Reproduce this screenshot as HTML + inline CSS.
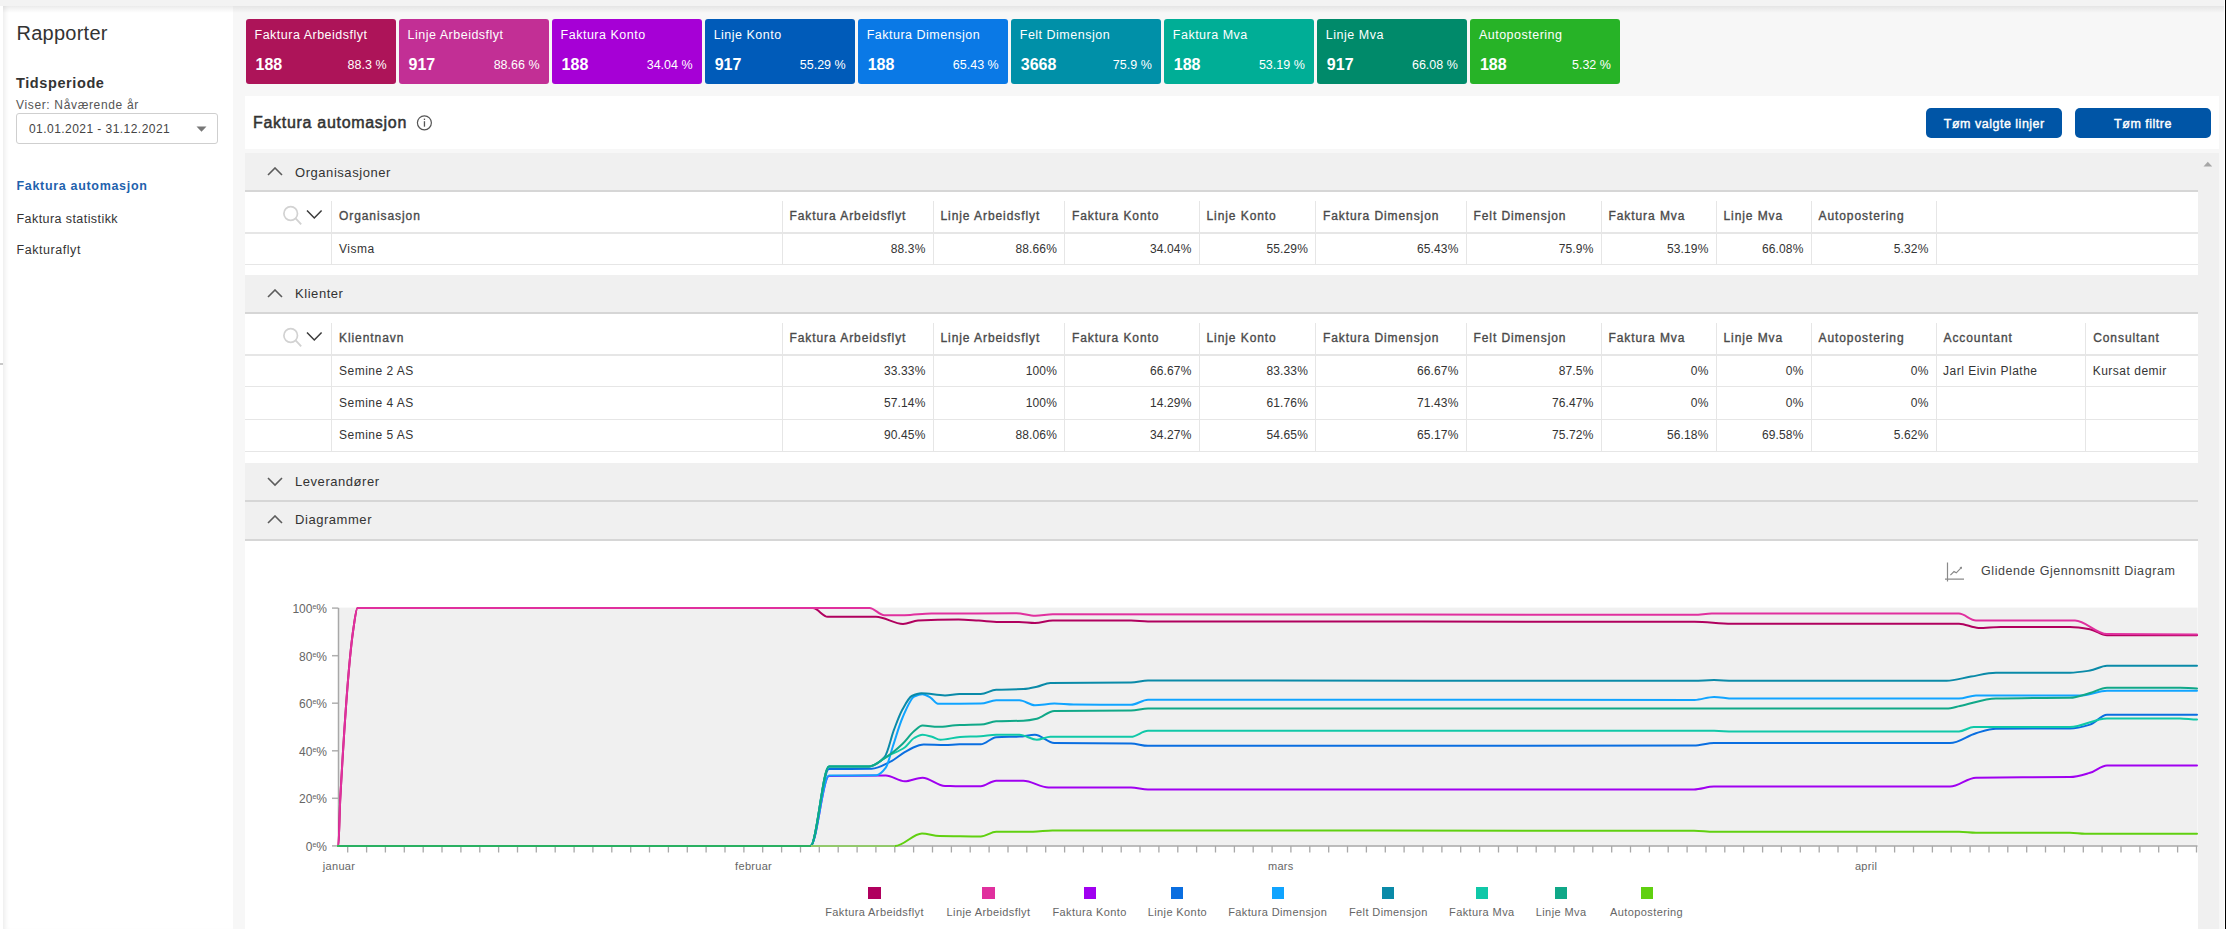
<!DOCTYPE html><html><head><meta charset="utf-8"><style>
*{box-sizing:border-box;margin:0;padding:0}
html,body{width:2226px;height:929px;overflow:hidden;background:#f7f7f7;font-family:"Liberation Sans", sans-serif;color:#333}
.a{position:absolute}
.t{position:absolute;white-space:nowrap;line-height:1}
.tile{position:absolute;top:19px;width:150px;height:65px;border-radius:3px;color:#fff}
.btn{position:absolute;top:108px;height:29.5px;background:#0055a6;border-radius:5px;color:#fff;-webkit-text-stroke:0.4px #fff;letter-spacing:0.5px;font-size:12.5px;text-align:center;line-height:33.5px}
.sec{position:absolute;left:245px;width:1952.5px;background:#f0f0f0;border-bottom:2px solid #d6d6d6}
.vl{position:absolute;width:1px;background:#e6e6e6}
.hl{position:absolute;height:1px;background:#e6e6e6}
</style></head><body>

<div class="a" style="left:3px;top:6px;width:230px;height:923px;background:#fff;box-shadow:inset 5px 0 5px -3px #ececec"></div>
<div class="a" style="left:0;top:0;width:2226px;height:5.5px;background:#f3f3f3"></div>
<div class="a" style="left:0;top:5.5px;width:2226px;height:7px;background:linear-gradient(rgba(0,0,0,0.075),rgba(0,0,0,0))"></div>
<div class="t" style="left:16.5px;top:23.2px;font-size:20px;letter-spacing:0.25px;color:#333">Rapporter</div>
<div class="t" style="left:16px;top:76.3px;font-size:14.5px;font-weight:bold;letter-spacing:0.6px;color:#333">Tidsperiode</div>
<div class="t" style="left:16px;top:98.8px;font-size:12px;letter-spacing:0.65px;color:#555">Viser: Nåværende år</div>
<div class="a" style="left:16.4px;top:113px;width:202px;height:30.5px;border:1px solid #cfcfcf;border-radius:3px;background:#fff"></div>
<div class="t" style="left:29px;top:122.5px;font-size:12px;letter-spacing:0.45px;color:#444">01.01.2021 - 31.12.2021</div>
<svg class="a" style="left:196px;top:126px" width="12" height="7"><path d="M0.5 0.5 H10.5 L5.5 5.8Z" fill="#777"/></svg>
<div class="t" style="left:16.5px;top:180px;font-size:12.5px;font-weight:bold;letter-spacing:0.68px;color:#1f62ad">Faktura automasjon</div>
<div class="t" style="left:16.5px;top:212.5px;font-size:12.5px;letter-spacing:0.43px;color:#333">Faktura statistikk</div>
<div class="t" style="left:16.5px;top:243.5px;font-size:12.5px;letter-spacing:0.55px;color:#333">Fakturaflyt</div>
<div class="tile" style="left:245.50px;background:#ad1459">
<div class="t" style="left:9px;top:10px;font-size:12.5px;letter-spacing:0.5px">Faktura Arbeidsflyt</div>
<div class="t" style="left:10px;top:37.5px;font-size:16px;font-weight:bold">188</div>
<div class="t" style="right:9px;top:39.5px;font-size:12.5px">88.3 %</div>
</div>
<div class="tile" style="left:398.55px;background:#c22f95">
<div class="t" style="left:9px;top:10px;font-size:12.5px;letter-spacing:0.5px">Linje Arbeidsflyt</div>
<div class="t" style="left:10px;top:37.5px;font-size:16px;font-weight:bold">917</div>
<div class="t" style="right:9px;top:39.5px;font-size:12.5px">88.66 %</div>
</div>
<div class="tile" style="left:551.60px;background:#a600d6">
<div class="t" style="left:9px;top:10px;font-size:12.5px;letter-spacing:0.5px">Faktura Konto</div>
<div class="t" style="left:10px;top:37.5px;font-size:16px;font-weight:bold">188</div>
<div class="t" style="right:9px;top:39.5px;font-size:12.5px">34.04 %</div>
</div>
<div class="tile" style="left:704.65px;background:#005bb9">
<div class="t" style="left:9px;top:10px;font-size:12.5px;letter-spacing:0.5px">Linje Konto</div>
<div class="t" style="left:10px;top:37.5px;font-size:16px;font-weight:bold">917</div>
<div class="t" style="right:9px;top:39.5px;font-size:12.5px">55.29 %</div>
</div>
<div class="tile" style="left:857.70px;background:#0a79e6">
<div class="t" style="left:9px;top:10px;font-size:12.5px;letter-spacing:0.5px">Faktura Dimensjon</div>
<div class="t" style="left:10px;top:37.5px;font-size:16px;font-weight:bold">188</div>
<div class="t" style="right:9px;top:39.5px;font-size:12.5px">65.43 %</div>
</div>
<div class="tile" style="left:1010.75px;background:#0090a8">
<div class="t" style="left:9px;top:10px;font-size:12.5px;letter-spacing:0.5px">Felt Dimensjon</div>
<div class="t" style="left:10px;top:37.5px;font-size:16px;font-weight:bold">3668</div>
<div class="t" style="right:9px;top:39.5px;font-size:12.5px">75.9 %</div>
</div>
<div class="tile" style="left:1163.80px;background:#00ae96">
<div class="t" style="left:9px;top:10px;font-size:12.5px;letter-spacing:0.5px">Faktura Mva</div>
<div class="t" style="left:10px;top:37.5px;font-size:16px;font-weight:bold">188</div>
<div class="t" style="right:9px;top:39.5px;font-size:12.5px">53.19 %</div>
</div>
<div class="tile" style="left:1316.85px;background:#008a6a">
<div class="t" style="left:9px;top:10px;font-size:12.5px;letter-spacing:0.5px">Linje Mva</div>
<div class="t" style="left:10px;top:37.5px;font-size:16px;font-weight:bold">917</div>
<div class="t" style="right:9px;top:39.5px;font-size:12.5px">66.08 %</div>
</div>
<div class="tile" style="left:1469.90px;background:#27b327">
<div class="t" style="left:9px;top:10px;font-size:12.5px;letter-spacing:0.5px">Autopostering</div>
<div class="t" style="left:10px;top:37.5px;font-size:16px;font-weight:bold">188</div>
<div class="t" style="right:9px;top:39.5px;font-size:12.5px">5.32 %</div>
</div>
<div class="a" style="left:245px;top:96px;width:1974px;height:52.6px;background:#fff"></div>
<div class="t" style="left:253px;top:114.5px;font-size:16px;-webkit-text-stroke:0.5px #333;letter-spacing:0.7px;color:#333">Faktura automasjon</div>
<svg class="a" style="left:415px;top:113px" width="20" height="20"><circle cx="9.4" cy="9.8" r="7" fill="none" stroke="#555" stroke-width="1.2"/><rect x="8.8" y="8.2" width="1.3" height="5.5" fill="#555"/><rect x="8.8" y="5.6" width="1.3" height="1.4" fill="#555"/></svg>
<div class="btn" style="left:1926.3px;width:136px">Tøm valgte linjer</div>
<div class="btn" style="left:2075px;width:136px">Tøm filtre</div>
<div class="a" style="left:245px;top:152.5px;width:1952.5px;height:777px;background:#fff"></div>
<div class="a" style="left:2197.5px;top:152.5px;width:21.5px;height:777px;background:#f0f0f0"></div>
<svg class="a" style="left:2203px;top:161px" width="10" height="6"><path d="M0.5 5.5 L4.8 0.8 L9.2 5.5Z" fill="#a6a6a6"/></svg>
<div class="a" style="left:2223.7px;top:0;width:1.3px;height:929px;background:#fff"></div>
<div class="a" style="left:2225px;top:0;width:1px;height:929px;background:#000"></div>
<div class="sec" style="top:153px;height:39px"></div>
<svg class="a" style="left:267px;top:166.5px" width="16" height="10"><path d="M1 8 L8 1 L15 8" fill="none" stroke="#5c5c5c" stroke-width="1.6"/></svg>
<div class="t" style="left:295px;top:165.7px;font-size:13px;letter-spacing:0.55px;color:#333">Organisasjoner</div>
<svg class="a" style="left:282px;top:205px" width="44" height="20"><circle cx="8.7" cy="8.5" r="6.8" fill="none" stroke="#d2d2d2" stroke-width="1.7"/><path d="M13.6 13.4 L19.2 19.4" stroke="#d2d2d2" stroke-width="1.8"/><path d="M25 5.5 L32.3 13 L39.6 5.5" fill="none" stroke="#3a3a3a" stroke-width="1.5"/></svg>
<div class="vl" style="left:331px;top:200.6px;height:63.800000000000004px"></div>
<div class="vl" style="left:781.5px;top:200.6px;height:63.800000000000004px"></div>
<div class="vl" style="left:932.5px;top:200.6px;height:63.800000000000004px"></div>
<div class="vl" style="left:1064px;top:200.6px;height:63.800000000000004px"></div>
<div class="vl" style="left:1198.5px;top:200.6px;height:63.800000000000004px"></div>
<div class="vl" style="left:1315px;top:200.6px;height:63.800000000000004px"></div>
<div class="vl" style="left:1465.5px;top:200.6px;height:63.800000000000004px"></div>
<div class="vl" style="left:1600.5px;top:200.6px;height:63.800000000000004px"></div>
<div class="vl" style="left:1715.5px;top:200.6px;height:63.800000000000004px"></div>
<div class="vl" style="left:1810.5px;top:200.6px;height:63.800000000000004px"></div>
<div class="vl" style="left:1935.5px;top:200.6px;height:63.800000000000004px"></div>
<div class="hl" style="left:245px;top:232px;width:1952.5px;height:1.5px"></div>
<div class="hl" style="left:245px;top:264.4px;width:1952.5px"></div>
<div class="t hd" style="left:339px;top:209.8px;font-size:12px;letter-spacing:0.92px;-webkit-text-stroke:0.35px #4a4a4a;color:#4a4a4a">Organisasjon</div>
<div class="t hd" style="left:789.5px;top:209.8px;font-size:12px;letter-spacing:0.92px;-webkit-text-stroke:0.35px #4a4a4a;color:#4a4a4a">Faktura Arbeidsflyt</div>
<div class="t hd" style="left:940.5px;top:209.8px;font-size:12px;letter-spacing:0.92px;-webkit-text-stroke:0.35px #4a4a4a;color:#4a4a4a">Linje Arbeidsflyt</div>
<div class="t hd" style="left:1072px;top:209.8px;font-size:12px;letter-spacing:0.92px;-webkit-text-stroke:0.35px #4a4a4a;color:#4a4a4a">Faktura Konto</div>
<div class="t hd" style="left:1206.5px;top:209.8px;font-size:12px;letter-spacing:0.92px;-webkit-text-stroke:0.35px #4a4a4a;color:#4a4a4a">Linje Konto</div>
<div class="t hd" style="left:1323px;top:209.8px;font-size:12px;letter-spacing:0.92px;-webkit-text-stroke:0.35px #4a4a4a;color:#4a4a4a">Faktura Dimensjon</div>
<div class="t hd" style="left:1473.5px;top:209.8px;font-size:12px;letter-spacing:0.92px;-webkit-text-stroke:0.35px #4a4a4a;color:#4a4a4a">Felt Dimensjon</div>
<div class="t hd" style="left:1608.5px;top:209.8px;font-size:12px;letter-spacing:0.92px;-webkit-text-stroke:0.35px #4a4a4a;color:#4a4a4a">Faktura Mva</div>
<div class="t hd" style="left:1723.5px;top:209.8px;font-size:12px;letter-spacing:0.92px;-webkit-text-stroke:0.35px #4a4a4a;color:#4a4a4a">Linje Mva</div>
<div class="t hd" style="left:1818.5px;top:209.8px;font-size:12px;letter-spacing:0.92px;-webkit-text-stroke:0.35px #4a4a4a;color:#4a4a4a">Autopostering</div>
<div class="t" style="left:339px;top:242.5px;font-size:12px;letter-spacing:0.5px;color:#333">Visma</div>
<div class="t" style="right:1300.5px;top:242.5px;font-size:12px;letter-spacing:0.15px;color:#333">88.3%</div>
<div class="t" style="right:1169.0px;top:242.5px;font-size:12px;letter-spacing:0.15px;color:#333">88.66%</div>
<div class="t" style="right:1034.5px;top:242.5px;font-size:12px;letter-spacing:0.15px;color:#333">34.04%</div>
<div class="t" style="right:918.0px;top:242.5px;font-size:12px;letter-spacing:0.15px;color:#333">55.29%</div>
<div class="t" style="right:767.5px;top:242.5px;font-size:12px;letter-spacing:0.15px;color:#333">65.43%</div>
<div class="t" style="right:632.5px;top:242.5px;font-size:12px;letter-spacing:0.15px;color:#333">75.9%</div>
<div class="t" style="right:517.5px;top:242.5px;font-size:12px;letter-spacing:0.15px;color:#333">53.19%</div>
<div class="t" style="right:422.5px;top:242.5px;font-size:12px;letter-spacing:0.15px;color:#333">66.08%</div>
<div class="t" style="right:297.5px;top:242.5px;font-size:12px;letter-spacing:0.15px;color:#333">5.32%</div>
<div class="sec" style="top:275px;height:39px"></div>
<svg class="a" style="left:267px;top:288.5px" width="16" height="10"><path d="M1 8 L8 1 L15 8" fill="none" stroke="#5c5c5c" stroke-width="1.6"/></svg>
<div class="t" style="left:295px;top:287.1px;font-size:13px;letter-spacing:0.55px;color:#333">Klienter</div>
<svg class="a" style="left:282px;top:327px" width="44" height="20"><circle cx="8.7" cy="8.5" r="6.8" fill="none" stroke="#d2d2d2" stroke-width="1.7"/><path d="M13.6 13.4 L19.2 19.4" stroke="#d2d2d2" stroke-width="1.8"/><path d="M25 5.5 L32.3 13 L39.6 5.5" fill="none" stroke="#3a3a3a" stroke-width="1.5"/></svg>
<div class="vl" style="left:331px;top:322.6px;height:128.6px"></div>
<div class="vl" style="left:781.5px;top:322.6px;height:128.6px"></div>
<div class="vl" style="left:932.5px;top:322.6px;height:128.6px"></div>
<div class="vl" style="left:1064px;top:322.6px;height:128.6px"></div>
<div class="vl" style="left:1198.5px;top:322.6px;height:128.6px"></div>
<div class="vl" style="left:1315px;top:322.6px;height:128.6px"></div>
<div class="vl" style="left:1465.5px;top:322.6px;height:128.6px"></div>
<div class="vl" style="left:1600.5px;top:322.6px;height:128.6px"></div>
<div class="vl" style="left:1715.5px;top:322.6px;height:128.6px"></div>
<div class="vl" style="left:1810.5px;top:322.6px;height:128.6px"></div>
<div class="vl" style="left:1935.5px;top:322.6px;height:128.6px"></div>
<div class="vl" style="left:2085.2px;top:322.6px;height:128.6px"></div>
<div class="hl" style="left:245px;top:354px;width:1952.5px;height:1.5px"></div>
<div class="hl" style="left:245px;top:386.4px;width:1952.5px"></div>
<div class="hl" style="left:245px;top:418.8px;width:1952.5px"></div>
<div class="hl" style="left:245px;top:451.2px;width:1952.5px"></div>
<div class="t hd" style="left:339px;top:331.8px;font-size:12px;letter-spacing:0.92px;-webkit-text-stroke:0.35px #4a4a4a;color:#4a4a4a">Klientnavn</div>
<div class="t hd" style="left:789.5px;top:331.8px;font-size:12px;letter-spacing:0.92px;-webkit-text-stroke:0.35px #4a4a4a;color:#4a4a4a">Faktura Arbeidsflyt</div>
<div class="t hd" style="left:940.5px;top:331.8px;font-size:12px;letter-spacing:0.92px;-webkit-text-stroke:0.35px #4a4a4a;color:#4a4a4a">Linje Arbeidsflyt</div>
<div class="t hd" style="left:1072px;top:331.8px;font-size:12px;letter-spacing:0.92px;-webkit-text-stroke:0.35px #4a4a4a;color:#4a4a4a">Faktura Konto</div>
<div class="t hd" style="left:1206.5px;top:331.8px;font-size:12px;letter-spacing:0.92px;-webkit-text-stroke:0.35px #4a4a4a;color:#4a4a4a">Linje Konto</div>
<div class="t hd" style="left:1323px;top:331.8px;font-size:12px;letter-spacing:0.92px;-webkit-text-stroke:0.35px #4a4a4a;color:#4a4a4a">Faktura Dimensjon</div>
<div class="t hd" style="left:1473.5px;top:331.8px;font-size:12px;letter-spacing:0.92px;-webkit-text-stroke:0.35px #4a4a4a;color:#4a4a4a">Felt Dimensjon</div>
<div class="t hd" style="left:1608.5px;top:331.8px;font-size:12px;letter-spacing:0.92px;-webkit-text-stroke:0.35px #4a4a4a;color:#4a4a4a">Faktura Mva</div>
<div class="t hd" style="left:1723.5px;top:331.8px;font-size:12px;letter-spacing:0.92px;-webkit-text-stroke:0.35px #4a4a4a;color:#4a4a4a">Linje Mva</div>
<div class="t hd" style="left:1818.5px;top:331.8px;font-size:12px;letter-spacing:0.92px;-webkit-text-stroke:0.35px #4a4a4a;color:#4a4a4a">Autopostering</div>
<div class="t hd" style="left:1943.5px;top:331.8px;font-size:12px;letter-spacing:0.92px;-webkit-text-stroke:0.35px #4a4a4a;color:#4a4a4a">Accountant</div>
<div class="t hd" style="left:2093.2px;top:331.8px;font-size:12px;letter-spacing:0.92px;-webkit-text-stroke:0.35px #4a4a4a;color:#4a4a4a">Consultant</div>
<div class="t" style="left:339px;top:364.5px;font-size:12px;letter-spacing:0.5px;color:#333">Semine 2 AS</div>
<div class="t" style="right:1300.5px;top:364.5px;font-size:12px;letter-spacing:0.15px;color:#333">33.33%</div>
<div class="t" style="right:1169.0px;top:364.5px;font-size:12px;letter-spacing:0.15px;color:#333">100%</div>
<div class="t" style="right:1034.5px;top:364.5px;font-size:12px;letter-spacing:0.15px;color:#333">66.67%</div>
<div class="t" style="right:918.0px;top:364.5px;font-size:12px;letter-spacing:0.15px;color:#333">83.33%</div>
<div class="t" style="right:767.5px;top:364.5px;font-size:12px;letter-spacing:0.15px;color:#333">66.67%</div>
<div class="t" style="right:632.5px;top:364.5px;font-size:12px;letter-spacing:0.15px;color:#333">87.5%</div>
<div class="t" style="right:517.5px;top:364.5px;font-size:12px;letter-spacing:0.15px;color:#333">0%</div>
<div class="t" style="right:422.5px;top:364.5px;font-size:12px;letter-spacing:0.15px;color:#333">0%</div>
<div class="t" style="right:297.5px;top:364.5px;font-size:12px;letter-spacing:0.15px;color:#333">0%</div>
<div class="t" style="left:1943.0px;top:364.5px;font-size:12px;letter-spacing:0.5px;color:#333">Jarl Eivin Plathe</div>
<div class="t" style="left:2092.7px;top:364.5px;font-size:12px;letter-spacing:0.5px;color:#333">Kursat demir</div>
<div class="t" style="left:339px;top:396.9px;font-size:12px;letter-spacing:0.5px;color:#333">Semine 4 AS</div>
<div class="t" style="right:1300.5px;top:396.9px;font-size:12px;letter-spacing:0.15px;color:#333">57.14%</div>
<div class="t" style="right:1169.0px;top:396.9px;font-size:12px;letter-spacing:0.15px;color:#333">100%</div>
<div class="t" style="right:1034.5px;top:396.9px;font-size:12px;letter-spacing:0.15px;color:#333">14.29%</div>
<div class="t" style="right:918.0px;top:396.9px;font-size:12px;letter-spacing:0.15px;color:#333">61.76%</div>
<div class="t" style="right:767.5px;top:396.9px;font-size:12px;letter-spacing:0.15px;color:#333">71.43%</div>
<div class="t" style="right:632.5px;top:396.9px;font-size:12px;letter-spacing:0.15px;color:#333">76.47%</div>
<div class="t" style="right:517.5px;top:396.9px;font-size:12px;letter-spacing:0.15px;color:#333">0%</div>
<div class="t" style="right:422.5px;top:396.9px;font-size:12px;letter-spacing:0.15px;color:#333">0%</div>
<div class="t" style="right:297.5px;top:396.9px;font-size:12px;letter-spacing:0.15px;color:#333">0%</div>
<div class="t" style="left:1943.0px;top:396.9px;font-size:12px;letter-spacing:0.5px;color:#333"></div>
<div class="t" style="left:2092.7px;top:396.9px;font-size:12px;letter-spacing:0.5px;color:#333"></div>
<div class="t" style="left:339px;top:429.3px;font-size:12px;letter-spacing:0.5px;color:#333">Semine 5 AS</div>
<div class="t" style="right:1300.5px;top:429.3px;font-size:12px;letter-spacing:0.15px;color:#333">90.45%</div>
<div class="t" style="right:1169.0px;top:429.3px;font-size:12px;letter-spacing:0.15px;color:#333">88.06%</div>
<div class="t" style="right:1034.5px;top:429.3px;font-size:12px;letter-spacing:0.15px;color:#333">34.27%</div>
<div class="t" style="right:918.0px;top:429.3px;font-size:12px;letter-spacing:0.15px;color:#333">54.65%</div>
<div class="t" style="right:767.5px;top:429.3px;font-size:12px;letter-spacing:0.15px;color:#333">65.17%</div>
<div class="t" style="right:632.5px;top:429.3px;font-size:12px;letter-spacing:0.15px;color:#333">75.72%</div>
<div class="t" style="right:517.5px;top:429.3px;font-size:12px;letter-spacing:0.15px;color:#333">56.18%</div>
<div class="t" style="right:422.5px;top:429.3px;font-size:12px;letter-spacing:0.15px;color:#333">69.58%</div>
<div class="t" style="right:297.5px;top:429.3px;font-size:12px;letter-spacing:0.15px;color:#333">5.62%</div>
<div class="t" style="left:1943.0px;top:429.3px;font-size:12px;letter-spacing:0.5px;color:#333"></div>
<div class="t" style="left:2092.7px;top:429.3px;font-size:12px;letter-spacing:0.5px;color:#333"></div>
<div class="sec" style="top:463px;height:39px"></div>
<svg class="a" style="left:267px;top:476.5px" width="16" height="10"><path d="M1 1 L8 8 L15 1" fill="none" stroke="#5c5c5c" stroke-width="1.6"/></svg>
<div class="t" style="left:295px;top:474.5px;font-size:13px;letter-spacing:0.55px;color:#333">Leverandører</div>
<div class="sec" style="top:501.5px;height:39px"></div>
<svg class="a" style="left:267px;top:515.0px" width="16" height="10"><path d="M1 8 L8 1 L15 8" fill="none" stroke="#5c5c5c" stroke-width="1.6"/></svg>
<div class="t" style="left:295px;top:512.8px;font-size:13px;letter-spacing:0.55px;color:#333">Diagrammer</div>
<svg class="a" style="left:1940px;top:558px" width="30" height="30"><path d="M7.5 4.5 V23.5 M5 21.2 H24" stroke="#8a8a8a" stroke-width="1.2" fill="none"/><path d="M10.4 17.1 L14 13.6 L16.3 14.8 L21.5 9.3" stroke="#8a8a8a" stroke-width="1.2" fill="none"/><path d="M19.5 9 L22 8.7 L21.8 11.2Z" fill="#8a8a8a"/></svg>
<div class="t" style="left:1981px;top:564.5px;font-size:12.5px;letter-spacing:0.57px;color:#444">Glidende Gjennomsnitt Diagram</div>
<svg class="a" style="left:0;top:0" width="2226" height="929">
<rect x="339" y="607.6" width="1858.5" height="238.4" fill="#f0f0f0"/>
<path d="M332 608.1 H338.5" stroke="#b0b0b0" stroke-width="1.5"/>
<path d="M332 655.7 H338.5" stroke="#b0b0b0" stroke-width="1.5"/>
<path d="M332 703.2 H338.5" stroke="#b0b0b0" stroke-width="1.5"/>
<path d="M332 750.8 H338.5" stroke="#b0b0b0" stroke-width="1.5"/>
<path d="M332 798.3 H338.5" stroke="#b0b0b0" stroke-width="1.5"/>
<path d="M332 845.9 H338.5" stroke="#b0b0b0" stroke-width="1.5"/>
<path d="M347.7 846 V852.5 M366.6 846 V852.5 M385.4 846 V852.5 M404.3 846 V852.5 M423.2 846 V852.5 M442.0 846 V852.5 M460.9 846 V852.5 M479.8 846 V852.5 M498.6 846 V852.5 M517.5 846 V852.5 M536.3 846 V852.5 M555.2 846 V852.5 M574.1 846 V852.5 M592.9 846 V852.5 M611.8 846 V852.5 M630.7 846 V852.5 M649.5 846 V852.5 M668.4 846 V852.5 M687.3 846 V852.5 M706.1 846 V852.5 M725.0 846 V852.5 M743.9 846 V852.5 M762.7 846 V852.5 M781.6 846 V852.5 M800.5 846 V852.5 M819.3 846 V852.5 M838.2 846 V852.5 M857.1 846 V852.5 M875.9 846 V852.5 M894.8 846 V852.5 M913.6 846 V852.5 M932.5 846 V852.5 M951.4 846 V852.5 M970.2 846 V852.5 M989.1 846 V852.5 M1008.0 846 V852.5 M1026.8 846 V852.5 M1045.7 846 V852.5 M1064.6 846 V852.5 M1083.4 846 V852.5 M1102.3 846 V852.5 M1121.2 846 V852.5 M1140.0 846 V852.5 M1158.9 846 V852.5 M1177.8 846 V852.5 M1196.6 846 V852.5 M1215.5 846 V852.5 M1234.4 846 V852.5 M1253.2 846 V852.5 M1272.1 846 V852.5 M1290.9 846 V852.5 M1309.8 846 V852.5 M1328.7 846 V852.5 M1347.5 846 V852.5 M1366.4 846 V852.5 M1385.3 846 V852.5 M1404.1 846 V852.5 M1423.0 846 V852.5 M1441.9 846 V852.5 M1460.7 846 V852.5 M1479.6 846 V852.5 M1498.5 846 V852.5 M1517.3 846 V852.5 M1536.2 846 V852.5 M1555.1 846 V852.5 M1573.9 846 V852.5 M1592.8 846 V852.5 M1611.7 846 V852.5 M1630.5 846 V852.5 M1649.4 846 V852.5 M1668.2 846 V852.5 M1687.1 846 V852.5 M1706.0 846 V852.5 M1724.8 846 V852.5 M1743.7 846 V852.5 M1762.6 846 V852.5 M1781.4 846 V852.5 M1800.3 846 V852.5 M1819.2 846 V852.5 M1838.0 846 V852.5 M1856.9 846 V852.5 M1875.8 846 V852.5 M1894.6 846 V852.5 M1913.5 846 V852.5 M1932.4 846 V852.5 M1951.2 846 V852.5 M1970.1 846 V852.5 M1989.0 846 V852.5 M2007.8 846 V852.5 M2026.7 846 V852.5 M2045.5 846 V852.5 M2064.4 846 V852.5 M2083.3 846 V852.5 M2102.1 846 V852.5 M2121.0 846 V852.5 M2139.9 846 V852.5 M2158.7 846 V852.5 M2177.6 846 V852.5 M2196.5 846 V852.5 " stroke="#a8a8a8" stroke-width="1.3"/>
<path d="M338.5 608 V846.5 M338 845.9 H2197.5" stroke="#a8a8a8" stroke-width="1.5" fill="none"/>
<g fill="none" stroke-width="2" stroke-linejoin="round" stroke-linecap="round">
<path d="M338.3 846.0 C339.0 846.0 339.6 810.1 340.3 798.0 C344.7 718.3 349.1 657.4 353.5 628.0 C354.8 619.1 356.2 608.0 357.5 608.0 C509.3 608.0 661.1 608.0 812.9 608.0 C817.8 608.0 822.8 616.8 827.7 616.8 C843.8 616.8 859.9 616.8 876.0 616.8 C885.0 616.8 894.0 624.0 903.0 624.0 C908.0 624.0 913.0 620.8 918.0 620.5 C931.5 619.8 945.0 619.5 958.5 619.5 C965.2 619.5 972.0 620.2 978.7 620.6 C985.5 621.0 992.2 622.0 999.0 622.0 C1005.7 622.0 1012.3 622.0 1019.0 622.0 C1024.3 622.0 1029.7 623.0 1035.0 623.0 C1040.9 623.0 1046.9 620.6 1052.8 620.6 C1078.9 620.6 1104.9 620.6 1131.0 620.6 C1136.7 620.6 1142.3 621.5 1148.0 621.5 C1330.2 621.5 1512.3 621.7 1694.5 621.7 C1706.8 621.7 1719.2 623.7 1731.5 623.7 C1807.3 623.7 1883.2 623.7 1959.0 623.7 C1965.5 623.7 1972.1 627.9 1978.6 627.9 C1986.1 627.9 1993.5 626.9 2001.0 626.9 C2024.0 626.9 2047.0 626.9 2070.0 626.9 C2076.6 626.9 2083.2 628.0 2089.8 629.2 C2095.5 630.2 2101.3 635.3 2107.0 635.3 C2137.0 635.3 2167.0 635.3 2197.0 635.3" stroke="#b0005e"/>
<path d="M338.3 846.0 C339.0 846.0 339.6 810.1 340.3 798.0 C344.7 718.3 349.1 657.4 353.5 628.0 C354.8 619.1 356.2 608.0 357.5 608.0 C528.2 608.0 698.8 608.0 869.5 608.0 C874.4 608.0 879.4 615.2 884.3 615.2 C891.1 615.2 897.8 615.2 904.6 615.2 C913.6 615.2 922.5 613.5 931.5 613.5 C959.8 613.5 988.1 613.3 1016.4 613.3 C1022.7 613.3 1029.0 615.8 1035.3 615.8 C1041.1 615.8 1047.0 614.3 1052.8 614.3 C1266.7 614.3 1480.6 614.8 1694.5 614.8 C1700.3 614.8 1706.0 613.6 1711.8 613.6 C1794.2 613.6 1876.5 613.6 1958.9 613.6 C1964.6 613.6 1970.3 620.5 1976.0 620.5 C2009.0 620.5 2042.0 620.5 2075.0 620.5 C2085.7 620.5 2096.3 634.1 2107.0 634.1 C2137.0 634.1 2167.0 634.6 2197.0 634.6" stroke="#e0309e"/>
<path d="M338.3 846.0 C495.7 846.0 653.1 846.0 810.5 846.0 C816.7 846.0 822.8 776.0 829.0 776.0 C847.9 776.0 866.9 775.5 885.8 775.5 C892.1 775.5 898.4 781.3 904.7 781.3 C910.6 781.3 916.6 777.7 922.5 777.7 C930.0 777.7 937.5 786.0 945.0 786.0 C948.5 786.0 952.0 786.2 955.5 786.2 C963.9 786.2 972.3 786.2 980.7 786.2 C985.9 786.2 991.0 780.7 996.2 780.7 C1005.2 780.7 1014.3 780.7 1023.3 780.7 C1031.7 780.7 1040.1 787.5 1048.5 787.5 C1076.0 787.5 1103.5 787.5 1131.0 787.5 C1136.7 787.5 1142.3 789.6 1148.0 789.6 C1330.0 789.6 1512.0 789.4 1694.0 789.4 C1700.7 789.4 1707.3 786.5 1714.0 786.5 C1792.7 786.5 1871.3 786.5 1950.0 786.5 C1958.7 786.5 1967.3 777.7 1976.0 777.7 C2007.3 777.7 2038.7 777.0 2070.0 777.0 C2076.7 777.0 2083.3 774.7 2090.0 772.8 C2095.7 771.2 2101.3 765.4 2107.0 765.4 C2137.0 765.4 2167.0 765.4 2197.0 765.4" stroke="#a000f0"/>
<path d="M338.3 846.0 C495.7 846.0 653.1 846.0 810.5 846.0 C816.7 846.0 822.8 769.0 829.0 769.0 C843.2 769.0 857.4 768.8 871.6 768.8 C877.9 768.8 884.2 764.8 890.5 761.7 C895.2 759.4 900.0 754.9 904.7 752.2 C909.1 749.7 913.4 746.9 917.8 745.7 C919.8 745.2 921.7 744.5 923.7 744.5 C930.8 744.5 937.9 745.1 945.0 745.1 C949.8 745.1 954.6 744.3 959.4 744.3 C966.5 744.3 973.6 744.3 980.7 744.3 C985.9 744.3 991.0 737.5 996.2 737.2 C1003.9 736.8 1011.7 736.9 1019.4 736.6 C1024.6 736.4 1029.7 734.8 1034.9 734.8 C1041.4 734.8 1047.8 743.0 1054.3 743.0 C1079.9 743.0 1105.4 743.5 1131.0 743.5 C1136.7 743.5 1142.3 745.8 1148.0 745.8 C1330.0 745.8 1512.0 745.6 1694.0 745.6 C1700.7 745.6 1707.3 743.1 1714.0 743.1 C1792.7 743.1 1871.3 743.1 1950.0 743.1 C1958.7 743.1 1967.3 735.6 1976.0 733.2 C1982.7 731.3 1989.3 728.7 1996.0 728.7 C2020.7 728.7 2045.3 728.5 2070.0 728.5 C2076.7 728.5 2083.3 726.6 2090.0 724.6 C2095.7 722.9 2101.3 714.8 2107.0 714.8 C2137.0 714.8 2167.0 714.8 2197.0 714.8" stroke="#0a6ee0"/>
<path d="M338.3 846.0 C495.7 846.0 653.1 846.0 810.5 846.0 C816.7 846.0 822.8 775.5 829.0 775.5 C844.8 775.5 860.5 775.3 876.3 775.3 C879.5 775.3 882.6 771.8 885.8 767.6 C888.2 764.5 890.5 753.4 892.9 746.3 C896.1 736.8 899.2 725.2 902.4 718.0 C906.3 709.1 910.3 698.5 914.2 696.6 C917.0 695.3 919.7 694.2 922.5 694.2 C925.3 694.2 928.0 696.2 930.8 697.8 C933.2 699.2 935.5 703.7 937.9 703.7 C952.2 703.7 966.4 703.6 980.7 703.6 C985.9 703.6 991.0 700.3 996.2 700.3 C1003.9 700.3 1011.7 700.3 1019.4 700.3 C1024.6 700.3 1029.7 705.2 1034.9 705.2 C1041.4 705.2 1047.8 703.6 1054.3 703.6 C1060.8 703.6 1067.2 704.6 1073.7 704.6 C1092.8 704.6 1111.9 704.8 1131.0 704.8 C1136.7 704.8 1142.3 699.7 1148.0 699.7 C1330.2 699.7 1512.3 699.9 1694.5 699.9 C1701.0 699.9 1707.5 696.9 1714.0 696.9 C1720.3 696.9 1726.7 698.6 1733.0 698.6 C1808.3 698.6 1883.7 698.6 1959.0 698.6 C1964.7 698.6 1970.3 695.4 1976.0 695.4 C2011.3 695.4 2046.7 695.4 2082.0 695.4 C2090.3 695.4 2098.7 690.7 2107.0 690.7 C2137.0 690.7 2167.0 690.7 2197.0 690.7" stroke="#10a4ff"/>
<path d="M338.3 846.0 C495.7 846.0 653.1 846.0 810.5 846.0 C816.7 846.0 822.8 766.4 829.0 766.4 C842.4 766.4 855.8 766.4 869.2 766.4 C874.3 766.4 879.5 762.5 884.6 757.0 C887.7 753.7 890.9 737.9 894.0 729.7 C896.8 722.4 899.6 714.7 902.4 709.6 C905.5 703.9 908.7 697.5 911.8 696.0 C915.0 694.5 918.1 693.3 921.3 693.3 C929.2 693.3 937.1 695.4 945.0 695.4 C949.8 695.4 954.6 694.0 959.4 694.0 C966.5 694.0 973.6 694.0 980.7 694.0 C985.9 694.0 991.0 689.9 996.2 689.7 C1005.2 689.3 1014.3 689.5 1023.3 689.1 C1027.8 688.9 1032.4 687.8 1036.9 686.8 C1041.4 685.8 1045.9 682.9 1050.4 682.9 C1077.3 682.9 1104.1 682.5 1131.0 682.5 C1136.7 682.5 1142.3 680.5 1148.0 680.5 C1330.0 680.5 1512.0 680.8 1694.0 680.8 C1700.7 680.8 1707.3 680.0 1714.0 680.0 C1720.3 680.0 1726.7 680.8 1733.0 680.8 C1804.2 680.8 1875.3 680.8 1946.5 680.8 C1954.7 680.8 1962.8 677.9 1971.0 676.6 C1979.3 675.2 1987.7 672.7 1996.0 672.7 C2020.7 672.7 2045.3 672.7 2070.0 672.7 C2076.7 672.7 2083.3 671.6 2090.0 670.6 C2095.7 669.7 2101.3 665.7 2107.0 665.7 C2137.0 665.7 2167.0 665.7 2197.0 665.7" stroke="#0a8aa8"/>
<path d="M338.3 846.0 C495.7 846.0 653.1 846.0 810.5 846.0 C816.7 846.0 822.8 766.4 829.0 766.4 C842.3 766.4 855.7 766.4 869.0 766.4 C875.4 766.4 881.8 759.2 888.2 755.8 C893.7 752.9 899.2 751.3 904.7 747.5 C907.9 745.3 911.0 739.8 914.2 738.0 C917.0 736.4 919.7 734.7 922.5 734.7 C925.7 734.7 928.8 735.9 932.0 736.8 C934.8 737.6 937.5 739.8 940.3 739.8 C946.9 739.8 953.4 737.4 960.0 737.0 C966.9 736.6 973.8 736.6 980.7 736.2 C985.9 735.9 991.0 734.8 996.2 734.8 C1003.9 734.8 1011.7 734.8 1019.4 734.8 C1025.2 734.8 1031.1 739.7 1036.9 739.7 C1041.4 739.7 1045.9 736.8 1050.4 736.8 C1077.3 736.8 1104.1 736.8 1131.0 736.8 C1136.7 736.8 1142.3 730.8 1148.0 730.8 C1336.7 730.8 1525.3 730.8 1714.0 730.8 C1720.3 730.8 1726.7 731.5 1733.0 731.5 C1808.3 731.5 1883.7 731.5 1959.0 731.5 C1963.9 731.5 1968.8 727.0 1973.7 727.0 C2005.8 727.0 2037.9 727.0 2070.0 727.0 C2082.3 727.0 2094.7 718.4 2107.0 718.4 C2131.3 718.4 2155.7 718.4 2180.0 718.4 C2185.7 718.4 2191.3 719.5 2197.0 719.5" stroke="#10c8a8"/>
<path d="M338.3 846.0 C495.7 846.0 653.1 846.0 810.5 846.0 C816.7 846.0 822.8 766.4 829.0 766.4 C842.3 766.4 855.7 766.4 869.0 766.4 C874.2 766.4 879.4 761.5 884.6 758.2 C890.5 754.5 896.5 749.6 902.4 744.0 C906.3 740.3 910.3 734.2 914.2 731.0 C917.0 728.8 919.7 725.6 922.5 725.6 C927.6 725.6 932.8 726.8 937.9 726.8 C945.3 726.8 952.6 725.0 960.0 725.0 C966.9 725.0 973.8 724.6 980.7 724.6 C985.9 724.6 991.0 721.5 996.2 721.3 C1005.2 720.9 1014.3 721.1 1023.3 720.7 C1027.8 720.5 1032.4 719.7 1036.9 718.7 C1042.7 717.4 1048.5 711.0 1054.3 711.0 C1079.9 711.0 1105.4 710.6 1131.0 710.6 C1136.7 710.6 1142.3 708.6 1148.0 708.6 C1414.2 708.6 1680.3 708.5 1946.5 708.5 C1951.0 708.5 1955.5 706.9 1960.0 706.0 C1972.0 703.7 1984.0 698.5 1996.0 698.5 C2020.7 698.5 2045.3 697.7 2070.0 697.7 C2076.7 697.7 2083.3 694.8 2090.0 693.0 C2095.7 691.5 2101.3 687.7 2107.0 687.7 C2131.3 687.7 2155.7 687.7 2180.0 687.7 C2185.7 687.7 2191.3 688.5 2197.0 688.5" stroke="#10a888"/>
<path d="M338.3 846.0 C523.9 846.0 709.4 846.0 895.0 846.0 C904.0 846.0 913.0 833.5 922.0 833.5 C927.8 833.5 933.7 836.0 939.5 836.0 C953.2 836.0 967.0 836.5 980.7 836.5 C985.9 836.5 991.0 831.7 996.2 831.7 C1008.5 831.7 1020.7 831.7 1033.0 831.7 C1039.5 831.7 1045.9 830.5 1052.4 830.5 C1266.3 830.5 1480.1 830.7 1694.0 830.7 C1700.7 830.7 1707.3 831.7 1714.0 831.7 C1795.7 831.7 1877.3 831.7 1959.0 831.7 C1964.7 831.7 1970.3 832.7 1976.0 832.7 C2007.3 832.7 2038.7 832.7 2070.0 832.7 C2075.0 832.7 2080.0 833.7 2085.0 833.7 C2122.3 833.7 2159.7 833.7 2197.0 833.7" stroke="#60d010"/>
</g>
<path d="M338.3 846 H811" stroke="#2ab062" stroke-width="2"/>
<path d="M811 846 H895" stroke="#92c96c" stroke-width="2"/>
</svg>
<div class="t" style="right:1899.0px;top:602.9px;font-size:12px;color:#666">100<span style="font-size:7px;vertical-align:4px">e</span>%</div>
<div class="t" style="right:1899.0px;top:650.5px;font-size:12px;color:#666">80<span style="font-size:7px;vertical-align:4px">e</span>%</div>
<div class="t" style="right:1899.0px;top:698.0px;font-size:12px;color:#666">60<span style="font-size:7px;vertical-align:4px">e</span>%</div>
<div class="t" style="right:1899.0px;top:745.6px;font-size:12px;color:#666">40<span style="font-size:7px;vertical-align:4px">e</span>%</div>
<div class="t" style="right:1899.0px;top:793.1px;font-size:12px;color:#666">20<span style="font-size:7px;vertical-align:4px">e</span>%</div>
<div class="t" style="right:1899.0px;top:840.7px;font-size:12px;color:#666">0<span style="font-size:7px;vertical-align:4px">e</span>%</div>
<div class="t" style="left:339.0px;top:861px;font-size:11px;letter-spacing:0.3px;color:#666;transform:translateX(-50%)">januar</div>
<div class="t" style="left:753.6px;top:861px;font-size:11px;letter-spacing:0.3px;color:#666;transform:translateX(-50%)">februar</div>
<div class="t" style="left:1280.8px;top:861px;font-size:11px;letter-spacing:0.3px;color:#666;transform:translateX(-50%)">mars</div>
<div class="t" style="left:1866.1px;top:861px;font-size:11px;letter-spacing:0.3px;color:#666;transform:translateX(-50%)">april</div>
<div class="a" style="left:868.4px;top:886.5px;width:12.2px;height:12.2px;background:#b0005e"></div>
<div class="t" style="left:874.5px;top:907px;font-size:11px;letter-spacing:0.4px;color:#666;transform:translateX(-50%)">Faktura Arbeidsflyt</div>
<div class="a" style="left:982.4px;top:886.5px;width:12.2px;height:12.2px;background:#e0309e"></div>
<div class="t" style="left:988.5px;top:907px;font-size:11px;letter-spacing:0.4px;color:#666;transform:translateX(-50%)">Linje Arbeidsflyt</div>
<div class="a" style="left:1083.5px;top:886.5px;width:12.2px;height:12.2px;background:#a000f0"></div>
<div class="t" style="left:1089.6px;top:907px;font-size:11px;letter-spacing:0.4px;color:#666;transform:translateX(-50%)">Faktura Konto</div>
<div class="a" style="left:1171.3px;top:886.5px;width:12.2px;height:12.2px;background:#0a6ee0"></div>
<div class="t" style="left:1177.4px;top:907px;font-size:11px;letter-spacing:0.4px;color:#666;transform:translateX(-50%)">Linje Konto</div>
<div class="a" style="left:1271.6px;top:886.5px;width:12.2px;height:12.2px;background:#10a4ff"></div>
<div class="t" style="left:1277.7px;top:907px;font-size:11px;letter-spacing:0.4px;color:#666;transform:translateX(-50%)">Faktura Dimensjon</div>
<div class="a" style="left:1382.3px;top:886.5px;width:12.2px;height:12.2px;background:#0a8aa8"></div>
<div class="t" style="left:1388.4px;top:907px;font-size:11px;letter-spacing:0.4px;color:#666;transform:translateX(-50%)">Felt Dimensjon</div>
<div class="a" style="left:1475.7px;top:886.5px;width:12.2px;height:12.2px;background:#10c8a8"></div>
<div class="t" style="left:1481.8px;top:907px;font-size:11px;letter-spacing:0.4px;color:#666;transform:translateX(-50%)">Faktura Mva</div>
<div class="a" style="left:1555.0px;top:886.5px;width:12.2px;height:12.2px;background:#10a888"></div>
<div class="t" style="left:1561.1px;top:907px;font-size:11px;letter-spacing:0.4px;color:#666;transform:translateX(-50%)">Linje Mva</div>
<div class="a" style="left:1640.5px;top:886.5px;width:12.2px;height:12.2px;background:#60d010"></div>
<div class="t" style="left:1646.6px;top:907px;font-size:11px;letter-spacing:0.4px;color:#666;transform:translateX(-50%)">Autopostering</div>
<div class="a" style="left:0;top:6px;width:3px;height:923px;background:#fff"></div>
<div class="a" style="left:0;top:363px;width:3px;height:2px;background:#c8c8c8"></div>
</body></html>
